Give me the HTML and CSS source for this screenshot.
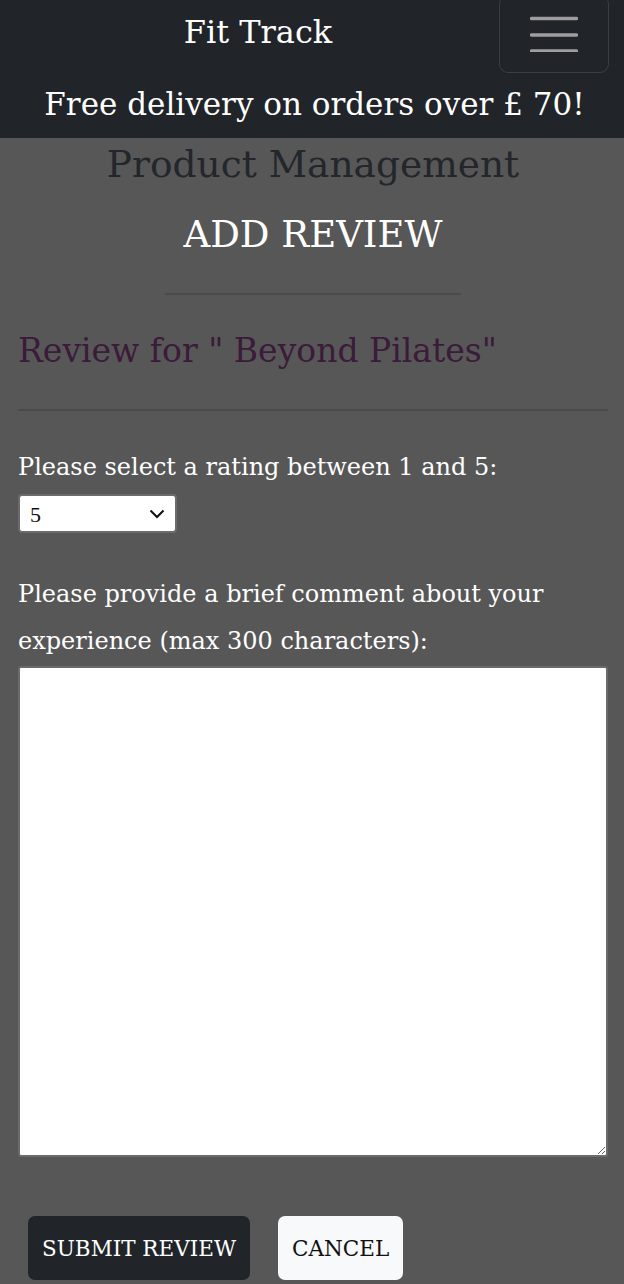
FILE: index.html
```html
<!DOCTYPE html>
<html lang="en">
<head>
<meta charset="utf-8">
<title>Fit Track - Add Review</title>
<link rel="stylesheet" href="styles.css">
</head>
<body>
<header class="site-header">
  <nav class="navbar">
    <a class="brand" href="#">Fit Track</a>
    <button class="toggler" type="button" aria-label="Toggle navigation">
      <svg width="48" height="36" viewBox="0 0 48 36" aria-hidden="true">
        <path d="M1.5 2.5h45M1.5 19h45M1.5 35h45" stroke="#9e9e9e" stroke-width="3.4" stroke-linecap="round" fill="none"/>
      </svg>
    </button>
  </nav>
  <div class="banner">Free delivery on orders over £ 70!</div>
</header>
<main class="page">
  <h1 class="page-title">Product Management</h1>
  <h2 class="page-subtitle">ADD REVIEW</h2>
  <hr class="short-rule">
  <h3 class="review-for">Review for " Beyond Pilates"</h3>
  <hr class="full-rule">
  <form class="review-form">
    <label class="field-label" for="rating">Please select a rating between 1 and 5:</label>
    <div class="select-wrap">
      <select id="rating" class="rating-select">
        <option>1</option><option>2</option><option>3</option><option>4</option><option selected>5</option>
      </select>
      <svg class="chev" width="16" height="10" viewBox="0 0 16 10" aria-hidden="true"><path d="M1.5 1.5l6.5 6.5 6.5-6.5" stroke="#111" stroke-width="2" fill="none"/></svg>
    </div>
    <label class="field-label comment-label" for="comment">Please provide a brief comment about your experience (max 300 characters):</label>
    <textarea id="comment" class="comment" maxlength="300"></textarea>
    <div class="actions">
      <button type="submit" class="btn btn-dark">SUBMIT REVIEW</button>
      <button type="button" class="btn btn-light">CANCEL</button>
    </div>
  </form>
</main>
</body>
</html>
```
FILE: styles.css
```css
* { box-sizing: border-box; }
html, body { margin: 0; padding: 0; }
body {
  background: #575757;
  font-family: "DejaVu Serif", "Liberation Serif", serif;
  color: #fff;
  overflow: hidden;
}
.site-header { background: #212529; }
.navbar {
  display: flex;
  align-items: flex-start;
  height: 76px;
  padding: 0 15px 0 0;
}
.brand {
  flex: 1;
  text-align: center;
  padding: 12px 0 0 17px;
  color: #fff;
  text-decoration: none;
  font-size: 32px;
  line-height: 40px;
}
.toggler {
  margin-top: -5px;
  width: 110px;
  height: 78px;
  background: transparent;
  border: 1.5px solid #3a3e42;
  border-radius: 9px;
  display: flex;
  align-items: center;
  justify-content: center;
  padding: 0;
}
.banner {
  height: 62px;
  padding-left: 5px;
  text-align: center;
  font-size: 31px;
  line-height: 56px;
  color: #fff;
}
.page { padding: 0 16px 0 18px; }
.page-title {
  margin: 0;
  text-align: center;
  font-weight: normal;
  font-size: 37.5px;
  line-height: 52px;
  color: #23262b;
}
.page-subtitle {
  margin: 21px 0 0;
  text-align: center;
  font-weight: normal;
  font-size: 37px;
  line-height: 48px;
  color: #fff;
}
.short-rule {
  width: 296px;
  margin: 34px auto 0;
  border: 0;
  border-top: 2px solid #4b4b4b;
}
.review-for {
  margin: 30px 0 0;
  font-weight: normal;
  font-size: 33px;
  line-height: 52px;
  color: #3b1a3a;
}
.full-rule {
  margin: 32px 0 0;
  border: 0;
  border-top: 2px solid #4b4b4b;
}
.review-form { display: flex; flex-direction: column; align-items: flex-start; }
.field-label {
  font-size: 24px;
  line-height: 47px;
  margin-top: 33px;
}
.select-wrap { position: relative; margin-top: 3px; }
.rating-select {
  appearance: none;
  -webkit-appearance: none;
  display: block;
  width: 159px;
  height: 39px;
  border: 2px solid #6b6b6b;
  border-radius: 4px;
  background: #fff;
  font-family: "Liberation Serif", serif;
  font-size: 22px;
  padding: 2px 10px 0;
  color: #111;
}
.chev { position: absolute; right: 12px; top: 15px; pointer-events: none; }
.comment-label { margin-top: 38px; }
.comment {
  display: block;
  align-self: stretch;
  height: 491px;
  margin-top: 1px;
  border: 2px solid #6b6b6b;
  border-radius: 3px;
  background: #fff;
  resize: vertical;
}
.actions { display: flex; gap: 28px; margin: 59px 0 0 10px; }
.btn {
  font-family: "DejaVu Serif", serif;
  font-size: 21.5px;
  height: 64px;
  padding: 0 14px;
  border: 0;
  border-radius: 7px;
}
.btn-dark { background: #212529; color: #fff; }
.btn-light { background: #f8f9fa; color: #111; }
```
